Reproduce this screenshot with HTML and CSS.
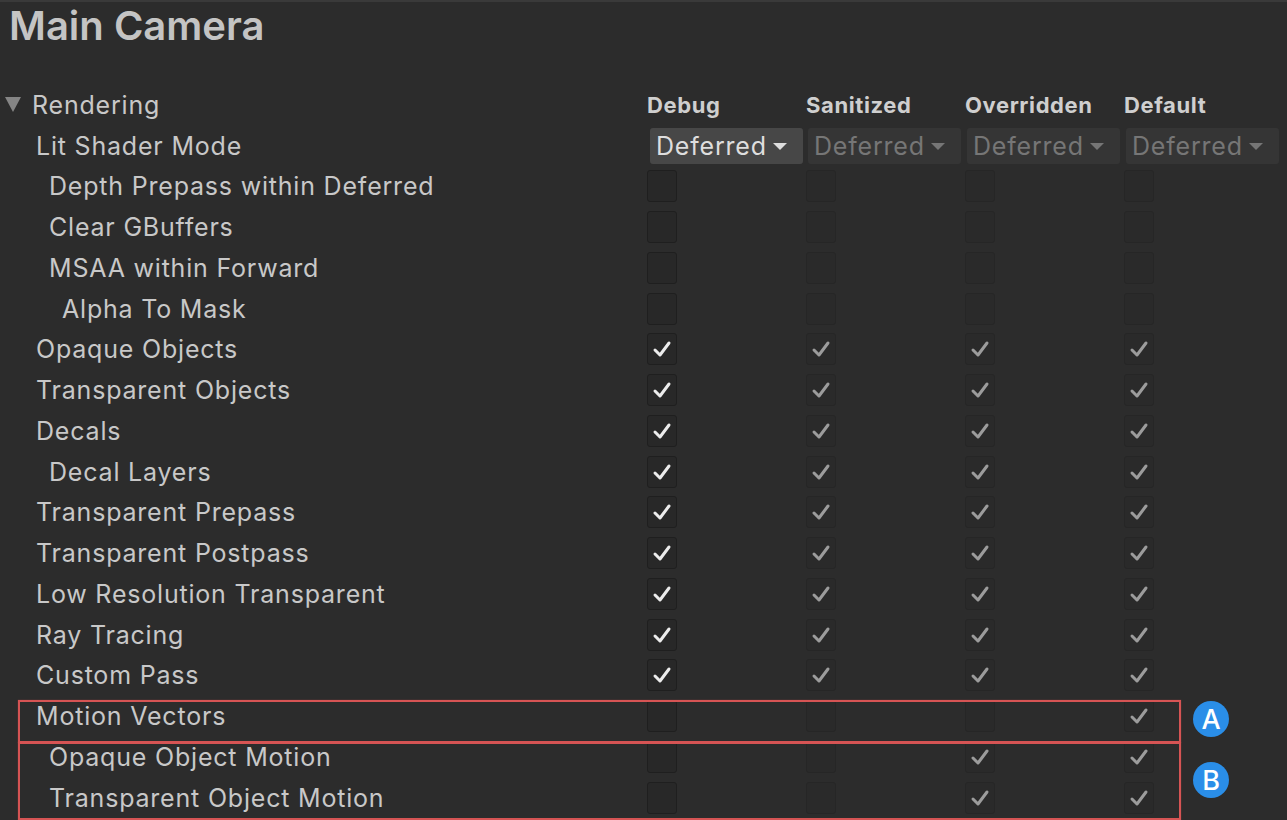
FILE: index.html
```html
<!DOCTYPE html>
<html>
<head>
<meta charset="utf-8">
<link rel="stylesheet" href="styles.css">
</head>
<body>
<div class="panel">
  <h1 class="title">Main Camera</h1>
  <div class="table">
    <div class="row header">
      <div class="label section"><span class="tri"></span>Rendering</div>
      <div class="col colhead">Debug</div>
      <div class="col colhead">Sanitized</div>
      <div class="col colhead">Overridden</div>
      <div class="col colhead">Default</div>
    </div>
    <div class="row">
      <div class="label l0">Lit Shader Mode</div>
      <div class="col"><div class="dd active">Deferred<span class="arrow"></span></div></div>
      <div class="col"><div class="dd">Deferred<span class="arrow"></span></div></div>
      <div class="col"><div class="dd">Deferred<span class="arrow"></span></div></div>
      <div class="col"><div class="dd">Deferred<span class="arrow"></span></div></div>
    </div>
  </div>
  <div class="table" id="rows"></div>
  <div class="anno box-a"></div>
  <div class="anno box-b"></div>
  <div class="badge badge-a">A</div>
  <div class="badge badge-b">B</div>
</div>
<script src="app.js"></script>
</body>
</html>
```

FILE: app.js
```js
const rows = [
  ["Depth Prepass within Deferred", 1, [0,0,0,0]],
  ["Clear GBuffers", 1, [0,0,0,0]],
  ["MSAA within Forward", 1, [0,0,0,0]],
  ["Alpha To Mask", 2, [0,0,0,0]],
  ["Opaque Objects", 0, [1,1,1,1]],
  ["Transparent Objects", 0, [1,1,1,1]],
  ["Decals", 0, [1,1,1,1]],
  ["Decal Layers", 1, [1,1,1,1]],
  ["Transparent Prepass", 0, [1,1,1,1]],
  ["Transparent Postpass", 0, [1,1,1,1]],
  ["Low Resolution Transparent", 0, [1,1,1,1]],
  ["Ray Tracing", 0, [1,1,1,1]],
  ["Custom Pass", 0, [1,1,1,1]],
  ["Motion Vectors", 0, [0,0,0,1]],
  ["Opaque Object Motion", 1, [0,0,1,1]],
  ["Transparent Object Motion", 1, [0,0,1,1]]
];
const check = '<svg viewBox="0 0 30 32" width="30" height="32"><path d="M8 17 L13 22 L22 10" fill="none" stroke="currentColor" stroke-width="3" stroke-linecap="round" stroke-linejoin="round"/></svg>';
const host = document.getElementById('rows');
rows.forEach(([name, lvl, vals]) => {
  const r = document.createElement('div');
  r.className = 'row';
  let html = `<div class="label l${lvl}">${name}</div>`;
  vals.forEach((v, i) => {
    html += `<div class="col"><div class="cb ${i === 0 ? 'live' : 'dim'}">${v ? check : ''}</div></div>`;
  });
  r.innerHTML = html;
  host.appendChild(r);
});
```

FILE: styles.css
```css
html, body {
  margin: 0;
  padding: 0;
  background: #2c2c2c;
}
body {
  font-family: Inter, "Noto Sans", sans-serif;
  color: #c9c9c9;
}
.panel {
  position: relative;
  width: 1287px;
  height: 820px;
  overflow: hidden;
  border-top: 2px solid #3a3a3a;
  box-sizing: border-box;
}
.title {
  margin: 0;
  height: 82.6px;
  padding-left: 9px;
  font-size: 40px;
  font-weight: 600;
  line-height: 48px;
  color: #c4c4c4;
}
.row {
  display: grid;
  grid-template-columns: 647px 159px 159px 159px 163px;
  height: 40.75px;
  align-items: center;
}
.label {
  font-size: 25px;
  letter-spacing: 0.8px;
  white-space: nowrap;
  color: #c8c8c8;
}
.l0 { padding-left: 36px; }
.l1 { padding-left: 49px; }
.l2 { padding-left: 62px; }
.section {
  display: flex;
  align-items: center;
  padding-left: 5px;
}
.tri {
  width: 0;
  height: 0;
  border-left: 8px solid transparent;
  border-right: 8px solid transparent;
  border-top: 15px solid #858585;
  margin-right: 11px;
}
.colhead {
  font-size: 22px;
  letter-spacing: 0.6px;
  font-weight: 700;
  color: #cfcfcf;
}
.dd {
  display: flex;
  align-items: center;
  width: 153px;
  height: 36px;
  margin-left: 2px;
  box-sizing: border-box;
  padding-left: 6px;
  background: #353535;
  border-radius: 3px;
  font-size: 25px;
  letter-spacing: 0.8px;
  color: #767676;
  white-space: nowrap;
}
.dd.active {
  background: #474747;
  color: #dedede;
  margin-left: 3px;
}
.arrow {
  width: 0;
  height: 0;
  border-left: 7px solid transparent;
  border-right: 7px solid transparent;
  border-top: 7px solid currentColor;
  margin-left: 6px;
  margin-top: 2px;
}
.cb {
  width: 30px;
  height: 32px;
  box-sizing: border-box;
  border-radius: 3px;
  border: 1px solid #1f1f1f;
  background: #282828;
  display: flex;
  align-items: center;
  justify-content: center;
}
.cb svg { display: block; margin: -1px; }
.cb.live { color: #ececec; }
.cb.dim { color: #9c9c9c; border-color: #262626; background: #2a2a2a; }
.anno {
  position: absolute;
  left: 18px;
  width: 1163px;
  border: 2px solid #d65454;
  box-sizing: border-box;
  box-shadow: 0 0 1px rgba(214, 84, 84, 0.6);
}
.box-a { top: 698px; height: 43px; }
.box-b { top: 740px; height: 78px; }
.badge {
  position: absolute;
  left: 1193px;
  width: 36px;
  height: 36px;
  border-radius: 50%;
  background: #2a8ee8;
  color: #fff;
  font-size: 27px;
  font-weight: 500;
  display: flex;
  align-items: center;
  justify-content: center;
}
.badge-a { top: 699px; }
.badge-b { top: 760px; }
```
